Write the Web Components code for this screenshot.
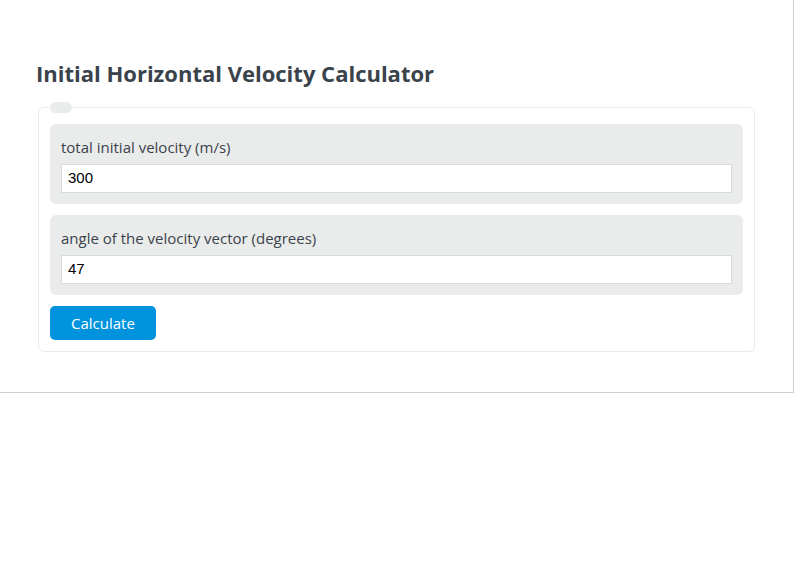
<!DOCTYPE html>
<html lang="en">
<head>
<meta charset="utf-8">
<title>Initial Horizontal Velocity Calculator</title>
<style>
    body{
        margin:0;
        background:#fff;
        color:#3a434c;
        font-family:"Open Sans", "Noto Sans", sans-serif;
        font-size:15px;
    }
</style>
</head>
<body>
<calculator-screen></calculator-screen>

<script>
const fieldStyle = `
    :host{
        display:block;
        padding:11px;
        background:#eaeceb;
        border-radius:6px;
    }
    label{
        display:block;
        line-height:25px;
        padding-bottom:4px;
    }
    input{
        display:block;
        box-sizing:border-box;
        width:100%;
        height:29px;
        padding:0 6px 2px;
        border:1px solid #d8dada;
        border-radius:0;
        background:#fff;
        color:#000;
        font:15px "Liberation Sans", Arial, sans-serif;
    }
`
class InputField extends HTMLElement{
    constructor(){
        super();
        this._shadowroot = this.attachShadow({mode: 'open'})
    }
    connectedCallback(){
        this._shadowroot.innerHTML = `
            <style>${fieldStyle}</style>
            <label for='value'>${this.getAttribute('label')}</label>
            <input id='value' type='text' inputmode='decimal' value='${this.getAttribute('value')}'>
        `
    }
    get value(){
        return this._shadowroot.getElementById('value').value;
    }
}
window.customElements.define('input-field', InputField)

const formStyle = `
    :host{
        display:block;
    }
    fieldset{
        margin:0 2px;
        padding:11px;
        border:1px solid #eaeceb;
        border-radius:6px;
        min-width:0;
    }
    legend{
        width:22px;
        height:11px;
        padding:0;
        background:#eaeceb;
        border-radius:6px;
    }
    .fields{
        display:grid;
        gap:11px;
    }
    button{
        justify-self:start;
        height:34px;
        padding:0 21px;
        border:0;
        border-radius:5px;
        background:#0093dd;
        color:#fff;
        font:inherit;
        cursor:pointer;
    }
    output:empty{
        display:none;
    }
`
class VelocityForm extends HTMLElement{
    constructor(){
        super();
        this._shadowroot = this.attachShadow({mode: 'open'})
    }
    connectedCallback(){
        this._shadowroot.innerHTML = `
            <style>${formStyle}</style>
            <form>
                <fieldset>
                    <legend></legend>
                    <div class='fields'>
                        <input-field id='velocity' label='total initial velocity (m/s)' value='300'></input-field>
                        <input-field id='angle' label='angle of the velocity vector (degrees)' value='47'></input-field>
                        <button>Calculate</button>
                        <output></output>
                    </div>
                </fieldset>
            </form>
        `
        const form = this._shadowroot.querySelector('form')
        form.addEventListener('submit', (e)=>{
            e.preventDefault();
            const velocity = Number(this._shadowroot.getElementById('velocity').value);
            const angle = Number(this._shadowroot.getElementById('angle').value);
            const result = velocity * Math.cos(angle * Math.PI / 180);
            this._shadowroot.querySelector('output').textContent = result.toFixed(2);
        })
    }
}
window.customElements.define('velocity-form', VelocityForm)

const panelStyle = `
    :host{
        display:block;
        margin-right:17px;
        padding:58px 36px 40px;
        border-right:1px solid #cccdcd;
        border-bottom:1px solid #cccdcd;
    }
    ::slotted(h1){
        margin:0 0 14px;
        font-size:22px;
        line-height:30px;
        font-weight:700;
    }
`
class CalculatorPanel extends HTMLElement{
    constructor(){
        super();
        this._shadowroot = this.attachShadow({mode: 'open'})
    }
    connectedCallback(){
        this._shadowroot.innerHTML = `
            <style>${panelStyle}</style>
            <slot></slot>
        `
    }
}
window.customElements.define('calculator-panel', CalculatorPanel)

class CalculatorScreen extends HTMLElement{
    constructor(){
        super();
        this._shadowroot = this.attachShadow({mode: 'open'})
    }
    connectedCallback(){
        this._shadowroot.innerHTML = `
            <style>:host{ display:block; }</style>
            <calculator-panel>
                <h1>Initial Horizontal Velocity Calculator</h1>
                <velocity-form></velocity-form>
            </calculator-panel>
        `
    }
}
window.customElements.define('calculator-screen', CalculatorScreen)
</script>
</body>
</html>
